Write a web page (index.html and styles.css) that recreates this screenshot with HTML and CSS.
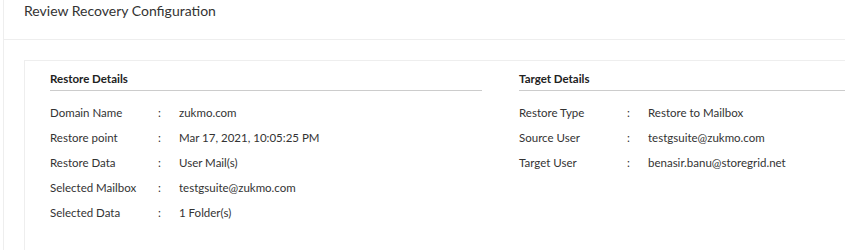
FILE: index.html
```html
<!DOCTYPE html>
<html>
<head>
<meta charset="utf-8">
<link rel="stylesheet" href="styles.css">
</head>
<body>
<div class="page">
  <div class="header"><h1 class="title">Review Recovery Configuration</h1></div>
  <div class="card">
    <div class="cols">
      <section class="col">
        <h2 class="col-title">Restore Details</h2>
        <div class="rows">
          <div class="label">Domain Name</div><div class="colon">:</div><div class="value">zukmo.com</div>
          <div class="label">Restore point</div><div class="colon">:</div><div class="value">Mar 17, 2021, 10:05:25 PM</div>
          <div class="label">Restore Data</div><div class="colon">:</div><div class="value">User Mail(s)</div>
          <div class="label">Selected Mailbox</div><div class="colon">:</div><div class="value">testgsuite@zukmo.com</div>
          <div class="label">Selected Data</div><div class="colon">:</div><div class="value">1 Folder(s)</div>
        </div>
      </section>
      <section class="col">
        <h2 class="col-title">Target Details</h2>
        <div class="rows">
          <div class="label">Restore Type</div><div class="colon">:</div><div class="value">Restore to Mailbox</div>
          <div class="label">Source User</div><div class="colon">:</div><div class="value">testgsuite@zukmo.com</div>
          <div class="label">Target User</div><div class="colon">:</div><div class="value">benasir.banu@storegrid.net</div>
        </div>
      </section>
    </div>
  </div>
</div>
</body>
</html>
```
FILE: styles.css
```css
html, body {
  margin: 0;
  padding: 0;
  background: #fff;
}
body {
  font-family: Lato, "Open Sans", sans-serif;
  color: #333;
}
.page {
  margin-left: 3px;
  border-left: 1px solid #eeeeee;
  height: 250px;
  box-sizing: border-box;
  overflow: hidden;
}
.header {
  box-sizing: border-box;
  height: 40px;
  border-bottom: 1px solid #eeeeee;
  padding: 2px 0 0 20px;
}
.title {
  margin: 0;
  font-size: 14px;
  font-weight: 400;
  line-height: 18px;
  color: #333;
}
.card {
  margin: 20px 0 0 20px;
  border-top: 1px solid #eeeeee;
  border-left: 1px solid #eeeeee;
  padding: 10px 0 40px 25px;
}
.cols {
  display: flex;
  gap: 37px;
}
.col {
  width: 432px;
  flex: none;
}
.col-title {
  margin: 0;
  font-size: 11.5px;
  font-weight: 700;
  line-height: 16px;
  padding-bottom: 3px;
  border-bottom: 1px solid #cccccc;
  color: #222;
}
.rows {
  margin-top: 9px;
  display: grid;
  grid-template-columns: 108px 21px 1fr;
  grid-auto-rows: 25px;
  font-size: 11.5px;
  line-height: 25px;
  color: #333;
}
.label, .colon, .value {
  white-space: nowrap;
}
```
